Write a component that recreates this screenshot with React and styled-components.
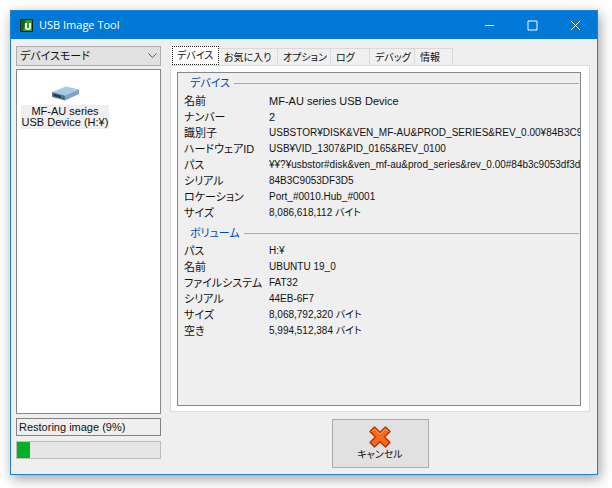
import React, { useState } from "react";
import styled, { createGlobalStyle } from "styled-components";

const GlobalStyle = createGlobalStyle`
  *, *::before, *::after { box-sizing: border-box; }
  body {
    margin: 0;
    background: #fff;
    color: #111;
    font: 11px/16px "Liberation Sans", "Noto Sans CJK JP", sans-serif;
    font-feature-settings: "palt";
  }
  button, input, select { font: inherit; color: inherit; font-feature-settings: inherit; }
`;

const Desktop = styled.main`
  display: flex;
  min-height: 100vh;
  padding: 10px 14px 13px 10px;
`;

const Window = styled.section`
  flex: 1;
  min-width: 0;
  display: flex;
  flex-direction: column;
  border: 1px solid #1883d7;
  background: #efefef;
  box-shadow: 2px 4px 12px rgba(0, 0, 0, 0.38);
`;

const TitleBar = styled.header`
  display: flex;
  align-items: center;
  height: 28px;
  padding-left: 9px;
  background: #0078d7;
  color: #fff;
`;

const Title = styled.h1`
  flex: 1;
  margin: 0 0 0 6px;
  font: 11px/16px "Open Sans", sans-serif;
`;

const CaptionButton = styled.button`
  display: grid;
  place-items: center;
  width: 43px;
  height: 28px;
  padding: 0;
  border: 0;
  background: none;
`;

const Body = styled.div`
  flex: 1;
  display: grid;
  grid-template-columns: 145px minmax(0, 1fr);
  gap: 9px;
  padding: 7px 7px 6px 5px;
`;

const Sidebar = styled.div`
  display: flex;
  flex-direction: column;
  padding-bottom: 9px;
`;

const ModePicker = styled.div`
  display: grid;
  align-items: center;
  > * { grid-area: 1 / 1; }
  > svg { justify-self: end; margin-right: 4px; pointer-events: none; }
`;

const ModeSelect = styled.select`
  appearance: none;
  width: 100%;
  height: 20px;
  padding: 0 20px 0 3px;
  border: 1px solid #adadad;
  border-radius: 0;
  background: #e1e1e1;
`;

const DeviceList = styled.ul`
  flex: 1;
  margin: 3px 0 4px;
  padding: 16px 4px;
  border: 1px solid #828790;
  background: #fff;
  list-style: none;
`;

const DeviceItem = styled.button`
  display: flex;
  flex-direction: column;
  align-items: center;
  width: 88px;
  padding: 0;
  border: 0;
  background: none;
  line-height: 11px;
`;

const DeviceName = styled.span`
  width: 88px;
  margin-top: 4px;
  padding: 1px 0;
  background: #efefef;
  white-space: pre-line;
`;

const Status = styled.input`
  width: 100%;
  height: 18px;
  padding: 0 2px;
  border: 1px solid #828282;
  background: #efefef;
`;

const Progress = styled.progress`
  appearance: none;
  display: block;
  width: 100%;
  height: 18px;
  margin-top: 5px;
  border: 1px solid #bcbcbc;
  &::-webkit-progress-bar { background: #e6e6e6; }
  &::-webkit-progress-value { background: #06b025; }
`;

const Content = styled.div`
  display: flex;
  flex-direction: column;
  min-width: 0;
`;

const TabList = styled.div`
  display: flex;
  align-items: flex-end;
  height: 19px;
  padding-left: 2px;
`;

const Tab = styled.button`
  width: ${(p) => p.$width}px;
  height: 17px;
  padding: 0 4px 0 5px;
  border: 1px solid #d9d9d9;
  border-width: 1px 1px 0 0;
  background: #f0f0f0;
  font-size: 10px;
  line-height: 15px;
  text-align: left;
  white-space: nowrap;
  &[aria-selected="true"] {
    height: 19px;
    padding: 0 4px;
    border: 1px dotted #222;
    background: #fff;
    line-height: 17px;
  }
`;

const TabPanel = styled.div`
  flex: 1;
  display: flex;
  padding: 6px 8px 5px 6px;
  border: 1px solid #dcdcdc;
  background: #fff;
`;

const Details = styled.div`
  flex: 1;
  min-width: 0;
  border: 1px solid #828790;
  padding: 0 0 0 6px;
  background: #efefef;
`;

const GroupTitle = styled.h2`
  display: flex;
  align-items: center;
  gap: 4px;
  height: 20px;
  margin: 0 1px 0 0;
  padding-left: 6px;
  color: #0046b4;
  font-size: 11px;
  font-weight: 400;
  &::after { content: ""; flex: 1; border-top: 1px solid #93a8e0; }
`;

const Properties = styled.table`
  width: 100%;
  margin-bottom: 2px;
  table-layout: fixed;
  border-collapse: collapse;
`;

const Name = styled.th`
  width: 85px;
  height: 16px;
  padding: 0;
  font-weight: 400;
  text-align: left;
  white-space: nowrap;
`;

const Value = styled.td`
  height: 16px;
  padding: 0;
  overflow: hidden;
  font-size: ${(p) => (p.$large ? 11 : 10)}px;
  white-space: nowrap;
`;

const Actions = styled.div`
  display: flex;
  justify-content: center;
  padding-top: 7px;
`;

const CancelButton = styled.button`
  display: flex;
  flex-direction: column;
  align-items: center;
  width: 97px;
  height: 49px;
  padding: 6px 0 0;
  border: 1px solid #adadad;
  background: #e1e1e1;
  font-size: 10px;
  line-height: 14px;
`;

const AppIcon = () => (
  <svg width="13" height="13" viewBox="0 0 13 13" aria-hidden="true">
    <rect width="13" height="13" rx="1" fill="#06250a" />
    <path d="M1 1h11v11H1z" fill="#2f9b28" />
    <path d="M1 1h5L3 12H1z" fill="#126719" />
    <path d="M6 4v4.500q0 1.500 2 1.500t2-1.500V4" fill="none" stroke="#f2fff0" strokeWidth="2" />
  </svg>
);

const DriveIcon = () => (
  <svg width="27" height="15" viewBox="0 0 27 15" aria-hidden="true">
    <path d="M0 6 14 0.500 27 3.500 13 9.500z" fill="#a9cae5" />
    <path d="M13 9.500 27 3.500V8L13 14.500z" fill="#7ba4c7" />
    <path d="M0 6 13 9.500v5L0 11z" fill="#52799b" />
    <path d="M1.500 7.800 11.500 10.500v2.200L1.500 10z" fill="#203b50" />
    <path d="M9 10.300h2v1.500H9z" fill="#38b33e" />
  </svg>
);

const CancelIcon = () => (
  <svg width="22" height="22" viewBox="0 0 22 22" aria-hidden="true">
    <path
      d="M5.500 1 11 6.300 16.500 1 21 5.500 15.700 11 21 16.500 16.500 21 11 15.700 5.500 21 1 16.500 6.300 11 1 5.500z"
      fill="#f4691a"
      stroke="#b3300c"
      strokeWidth="1.300"
      strokeLinejoin="round"
    />
    <path d="M3 5.500 5.500 3 11 8.300 16.500 3 19 5.500" fill="none" stroke="#ffab62" />
  </svg>
);

const captions = [
  { label: "最小化", path: "M1 5.500h9" },
  { label: "最大化", path: "M1 1h9v9H1z" },
  { label: "閉じる", path: "M1 1l9 9M10 1l-9 9" },
];

const tabs = [
  { label: "デバイス", width: 47 },
  { label: "お気に入り", width: 59 },
  { label: "オプション", width: 53 },
  { label: "ログ", width: 39 },
  { label: "デバッグ", width: 45 },
  { label: "情報", width: 38 },
];

const groups = [
  {
    title: "デバイス",
    rows: [
      ["名前", "MF-AU series USB Device", true],
      ["ナンバー", "2", true],
      ["識別子", "USBSTOR¥DISK&VEN_MF-AU&PROD_SERIES&REV_0.00¥84B3C9"],
      ["ハードウェアID", "USB¥VID_1307&PID_0165&REV_0100"],
      ["パス", "¥¥?¥usbstor#disk&ven_mf-au&prod_series&rev_0.00#84b3c9053df3d"],
      ["シリアル", "84B3C9053DF3D5"],
      ["ロケーション", "Port_#0010.Hub_#0001"],
      ["サイズ", "8,086,618,112 バイト"],
    ],
  },
  {
    title: "ボリューム",
    rows: [
      ["パス", "H:¥"],
      ["名前", "UBUNTU 19_0"],
      ["ファイルシステム", "FAT32"],
      ["シリアル", "44EB-6F7"],
      ["サイズ", "8,068,792,320 バイト"],
      ["空き", "5,994,512,384 バイト"],
    ],
  },
];

export default function App() {
  const [active, setActive] = useState("デバイス");
  return (
    <>
      <GlobalStyle />
      <Desktop>
        <Window>
          <TitleBar>
            <AppIcon />
            <Title>USB Image Tool</Title>
            {captions.map((c) => (
              <CaptionButton key={c.label} aria-label={c.label}>
                <svg width="11" height="11" viewBox="0 0 11 11" fill="none" stroke="#fff" aria-hidden="true">
                  <path d={c.path} />
                </svg>
              </CaptionButton>
            ))}
          </TitleBar>
          <Body>
            <Sidebar>
              <ModePicker>
                <ModeSelect aria-label="モード">
                  <option>デバイスモード</option>
                </ModeSelect>
                <svg width="9" height="6" viewBox="0 0 9 6" fill="none" stroke="#555" aria-hidden="true">
                  <path d="M0.500 0.500l4 4 4-4" />
                </svg>
              </ModePicker>
              <DeviceList>
                <li>
                  <DeviceItem>
                    <DriveIcon />
                    <DeviceName>{"MF-AU series\nUSB Device (H:¥)"}</DeviceName>
                  </DeviceItem>
                </li>
              </DeviceList>
              <Status readOnly aria-label="状態" value="Restoring image (9%)" />
              <Progress aria-label="進行状況" max="100" value="9" />
            </Sidebar>
            <Content>
              <TabList role="tablist">
                {tabs.map((t) => (
                  <Tab
                    key={t.label}
                    role="tab"
                    $width={t.width}
                    aria-selected={t.label === active}
                    onClick={() => setActive(t.label)}
                  >
                    {t.label}
                  </Tab>
                ))}
              </TabList>
              <TabPanel role="tabpanel" aria-label={active}>
                <Details>
                  {groups.map((g) => (
                    <section key={g.title}>
                      <GroupTitle>{g.title}</GroupTitle>
                      <Properties>
                        <tbody>
                          {g.rows.map(([name, value, large]) => (
                            <tr key={name}>
                              <Name scope="row">{name}</Name>
                              <Value $large={large}>{value}</Value>
                            </tr>
                          ))}
                        </tbody>
                      </Properties>
                    </section>
                  ))}
                </Details>
              </TabPanel>
              <Actions>
                <CancelButton>
                  <CancelIcon />
                  キャンセル
                </CancelButton>
              </Actions>
            </Content>
          </Body>
        </Window>
      </Desktop>
    </>
  );
}
